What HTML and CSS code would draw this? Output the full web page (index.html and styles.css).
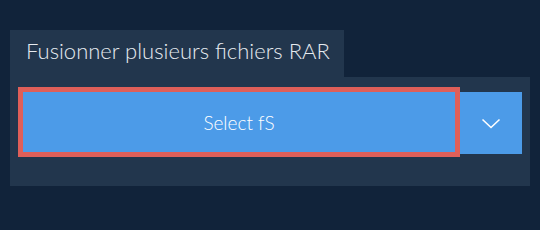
FILE: index.html
```html
<!DOCTYPE html>
<html lang="fr">
<head>
<meta charset="utf-8">
<link rel="stylesheet" href="styles.css">
</head>
<body>
<div class="widget">
  <div class="tab">Fusionner plusieurs fichiers RAR</div>
  <div class="panel">
    <div class="row">
      <button class="select">Select fS</button>
      <button class="drop" aria-label="Plus">
        <svg width="20" height="11" viewBox="0 0 20 11"><path d="M1.5 1.5 L10 9.5 L18.5 1.5" fill="none" stroke="#fff" stroke-width="1.6"/></svg>
      </button>
    </div>
  </div>
</div>
</body>
</html>
```
FILE: styles.css
```css
html, body {
  margin: 0;
  padding: 0;
  background: #11233a;
  width: 540px;
  height: 230px;
  overflow: hidden;
  font-family: Lato, "Open Sans", sans-serif;
}
.widget {
  padding: 30px 10px 0 10px;
}
.tab {
  display: inline-block;
  box-sizing: border-box;
  width: 334px;
  height: 47px;
  background: #22364d;
  color: #e6ebf0;
  font-size: 22px;
  font-weight: 300;
  line-height: 26px;
  padding: 8px 0 0 16px;
  vertical-align: top;
}
.panel {
  background: #22364d;
  height: 109px;
  box-sizing: border-box;
  padding: 10px 8px 0 8px;
}
.row {
  display: flex;
  align-items: flex-start;
}
.select {
  box-sizing: border-box;
  width: 442px;
  height: 70px;
  border: 5px solid #df5f59;
  background: #4c9be8;
  color: #fff;
  font-family: Lato, sans-serif;
  font-size: 19px;
  font-weight: 300;
  padding: 0;
  margin: 0;
}
.drop {
  box-sizing: border-box;
  width: 62px;
  height: 62px;
  margin: 5px 0 0 0;
  border: 0;
  padding: 0;
  background: #4c9be8;
  display: flex;
  align-items: center;
  justify-content: center;
}
.drop svg {
  display: block;
}
```
